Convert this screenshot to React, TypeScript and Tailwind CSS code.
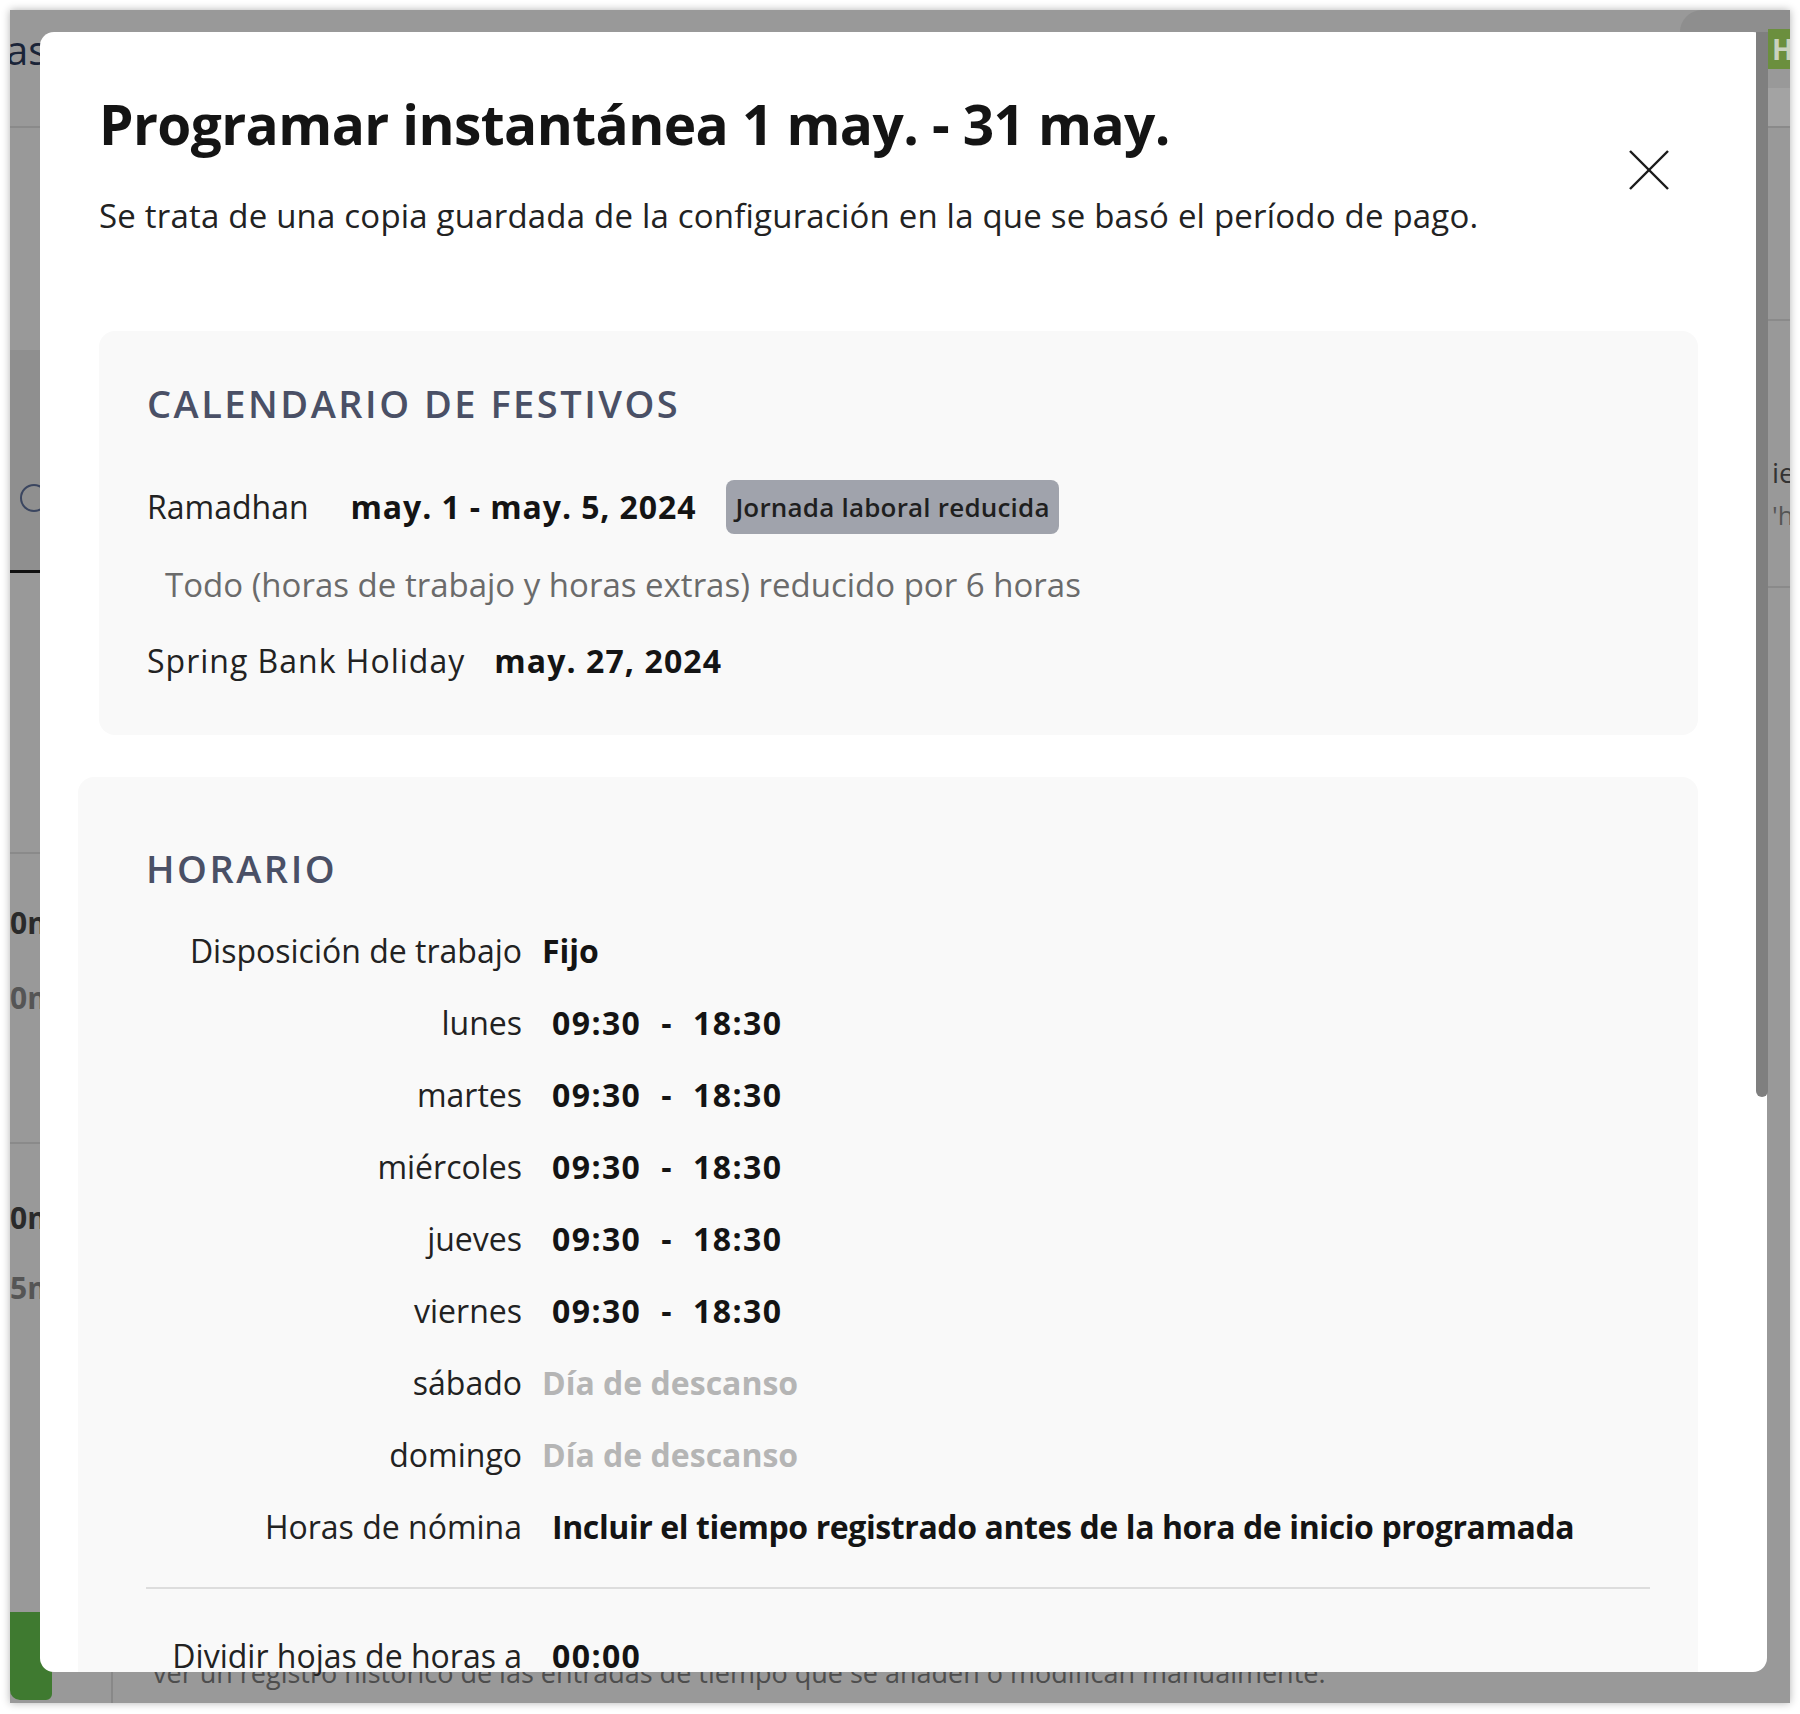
const WEEK = [
  { day: 'lunes', from: '09:30', to: '18:30' },
  { day: 'martes', from: '09:30', to: '18:30' },
  { day: 'miércoles', from: '09:30', to: '18:30' },
  { day: 'jueves', from: '09:30', to: '18:30' },
  { day: 'viernes', from: '09:30', to: '18:30' },
  { day: 'sábado', from: null, to: null },
  { day: 'domingo', from: null, to: null },
]

// page that sits under the dimmed overlay; only thin strips of it show
function Backdrop() {
  return (
    <>
      {/* left strip */}
      <div className="absolute left-0 top-0 flex w-[40px] flex-col">
        <div className="-ml-[4px] h-[116px] pt-[12px] text-[40px] leading-[56px] text-[#1a2438]">as</div>
        <div className="h-[2px] bg-[#8a8a8a]" />
        <div className="h-[222px]" />
        <div className="h-[220px] bg-[#8f8f8f] pl-[10px] pt-[134px]">
          <div className="h-[28px] w-[28px] rounded-full border-2 border-[#3b4660]" />
        </div>
        <div className="h-[3px] bg-[#111111]" />
        <div className="h-[279px]" />
        <div className="h-[2px] bg-[#8a8a8a]" />
        <div className="flex h-[288px] flex-col gap-[35px] pt-[49px] text-[30px] leading-[40px] font-bold">
          <span className="text-[#2a2a2a]">0m</span>
          <span className="text-[#555555]">0m</span>
        </div>
        <div className="h-[2px] bg-[#8a8a8a]" />
        <div className="flex h-[468px] flex-col gap-[30px] pt-[54px] text-[30px] leading-[40px] font-bold">
          <span className="text-[#2a2a2a]">0m</span>
          <span className="text-[#555555]">5m</span>
        </div>
        <div className="h-[88px] w-[42px] rounded-bl-[10px] rounded-br-[6px] bg-[#3f7a30]" />
      </div>

      {/* bottom strip */}
      <div className="absolute left-[101px] top-[1660px] flex items-start gap-[40px]">
        <div className="h-[40px] w-[2px] bg-[#888888]" />
        <span className="-mt-[11px] whitespace-nowrap text-[27px] leading-[27px] text-[#4d4d4d]">
          ver un registro histórico de las entradas de tiempo que se añaden o modifican manualmente.
        </span>
      </div>

      {/* right strip */}
      <div className="absolute left-[1670px] top-0 h-[40px] w-[110px] rounded-tl-[22px] bg-[#8e8e8e]" />
      <div className="absolute left-[1758px] top-[19px] flex w-[30px] flex-col">
        <div className="flex h-[40px] items-center bg-[#6b8f3e] pl-[4px] text-[28px] font-bold text-[#c9d2bf]">H</div>
        <div className="h-[19px]" />
        <div className="h-[38px] bg-[#a3a3a3]" />
        <div className="h-[2px] bg-[#8a8a8a]" />
        <div className="h-[191px]" />
        <div className="h-[2px] bg-[#8a8a8a]" />
        <div className="flex h-[265px] flex-col gap-[12px] pl-[4px] pt-[135px]">
          <span className="text-[28px] leading-[32px] text-[#333333]">ie</span>
          <span className="text-[26px] leading-[30px] text-[#555555]">'h</span>
        </div>
        <div className="h-[2px] bg-[#8a8a8a]" />
      </div>
    </>
  )
}

function CloseIcon() {
  return (
    <svg width="42" height="42" viewBox="0 0 42 42" fill="none" stroke="#1a1a1a" strokeWidth="2.4">
      <line x1="2" y1="2" x2="40" y2="40" />
      <line x1="40" y1="2" x2="2" y2="40" />
    </svg>
  )
}

export default function App() {
  return (
    <div className="h-[1714px] w-[1800px] bg-white p-[10px] font-['Open_Sans',sans-serif] text-[#1f1f1f]">
      <div className="relative h-[1693px] w-[1780px] overflow-hidden bg-[#999999] shadow-[0_0_8px_rgba(0,0,0,0.3)]">
        <Backdrop />

        {/* Modal */}
        <div className="relative ml-[30px] mt-[22px] flex h-[1640px] w-[1727px] flex-col rounded-[14px] bg-white pl-[59px] pr-[69px]">
          {/* Header */}
          <div className="flex items-start justify-between pt-[58px]">
            <div>
              <h1 className="text-[55px] leading-[68px] font-bold tracking-[-0.6px] text-[#141414]">
                Programar instantánea 1 may. - 31 may.
              </h1>
              <p className="mt-[36px] text-[33px] leading-[44px] tracking-[0.2px] text-[#222222]">
                Se trata de una copia guardada de la configuración en la que se basó el período de pago.
              </p>
            </div>
            <button className="mr-[28px] mt-[59px]">
              <CloseIcon />
            </button>
          </div>

          {/* Calendario de festivos */}
          <section className="mt-[93px] rounded-[16px] bg-[#f9f9f9] pb-[52px] pl-[48px] pt-[50px]">
            <h2 className="text-[38px] leading-[44px] font-semibold uppercase tracking-[2.5px] text-[#4a5066]">
              Calendario de festivos
            </h2>
            <div className="mt-[55px] flex h-[54px] items-center text-[32px] leading-[54px]">
              <span className="mr-[42px] text-[#222222]">Ramadhan</span>
              <span className="mr-[30px] font-bold tracking-[0.9px] text-[#141414]">may. 1 - may. 5, 2024</span>
              <span className="rounded-[8px] bg-[#a0a3ac] px-[9px] text-[26px] leading-[54px] font-semibold tracking-[0.2px] text-[#1f1f1f]">
                Jornada laboral reducida
              </span>
            </div>
            <p className="ml-[18px] mt-[29px] text-[33px] leading-[44px] text-[#6b6b6b]">
              Todo (horas de trabajo y horas extras) reducido por 6 horas
            </p>
            <div className="mt-[32px] flex text-[32px] leading-[44px]">
              <span className="mr-[29px] tracking-[1px] text-[#222222]">Spring Bank Holiday</span>
              <span className="font-bold tracking-[1.1px] text-[#141414]">may. 27, 2024</span>
            </div>
          </section>

          {/* Horario */}
          <section className="-ml-[21px] mt-[42px] min-h-0 flex-1 rounded-t-[16px] bg-[#f9f9f9] pl-[68px] pt-[69px]">
            <h2 className="text-[38px] leading-[44px] font-semibold uppercase tracking-[2.5px] text-[#4a5066]">
              Horario
            </h2>
            <div className="mt-[25px] grid grid-cols-[376px_1fr] gap-x-[20px] text-[32px] leading-[72px]">
              <span className="text-right text-[#222222]">Disposición de trabajo</span>
              <span className="font-bold text-[#141414]">Fijo</span>
              {WEEK.map((d) => (
                <div key={d.day} className="contents">
                  <span className="text-right text-[#222222]">{d.day}</span>
                  {d.from ? (
                    <span className="flex pl-[10px] font-bold tracking-[1.4px] text-[#141414]">
                      <span>{d.from}</span>
                      <span className="px-[20px]">-</span>
                      <span>{d.to}</span>
                    </span>
                  ) : (
                    <span className="font-bold text-[#b5b5b5]">Día de descanso</span>
                  )}
                </div>
              ))}
              <span className="text-right text-[#222222]">Horas de nómina</span>
              <span className="pl-[10px] font-bold tracking-[-0.4px] text-[#141414]">
                Incluir el tiempo registrado antes de la hora de inicio programada
              </span>
            </div>
            <div className="mr-[48px] mt-[24px] h-[2px] bg-[#dddddd]" />
            <div className="mt-[31px] grid grid-cols-[376px_1fr] gap-x-[20px] text-[32px] leading-[72px]">
              <span className="text-right text-[#222222]">Dividir hojas de horas a</span>
              <span className="pl-[10px] font-bold tracking-[1.4px] text-[#141414]">00:00</span>
            </div>
          </section>
        </div>

        {/* page scrollbar thumb, drawn over the modal edge */}
        <div className="absolute left-[1746px] top-[22px] h-[1065px] w-[12px] rounded-b-full bg-[#7f7f7f]" />
      </div>
    </div>
  )
}
